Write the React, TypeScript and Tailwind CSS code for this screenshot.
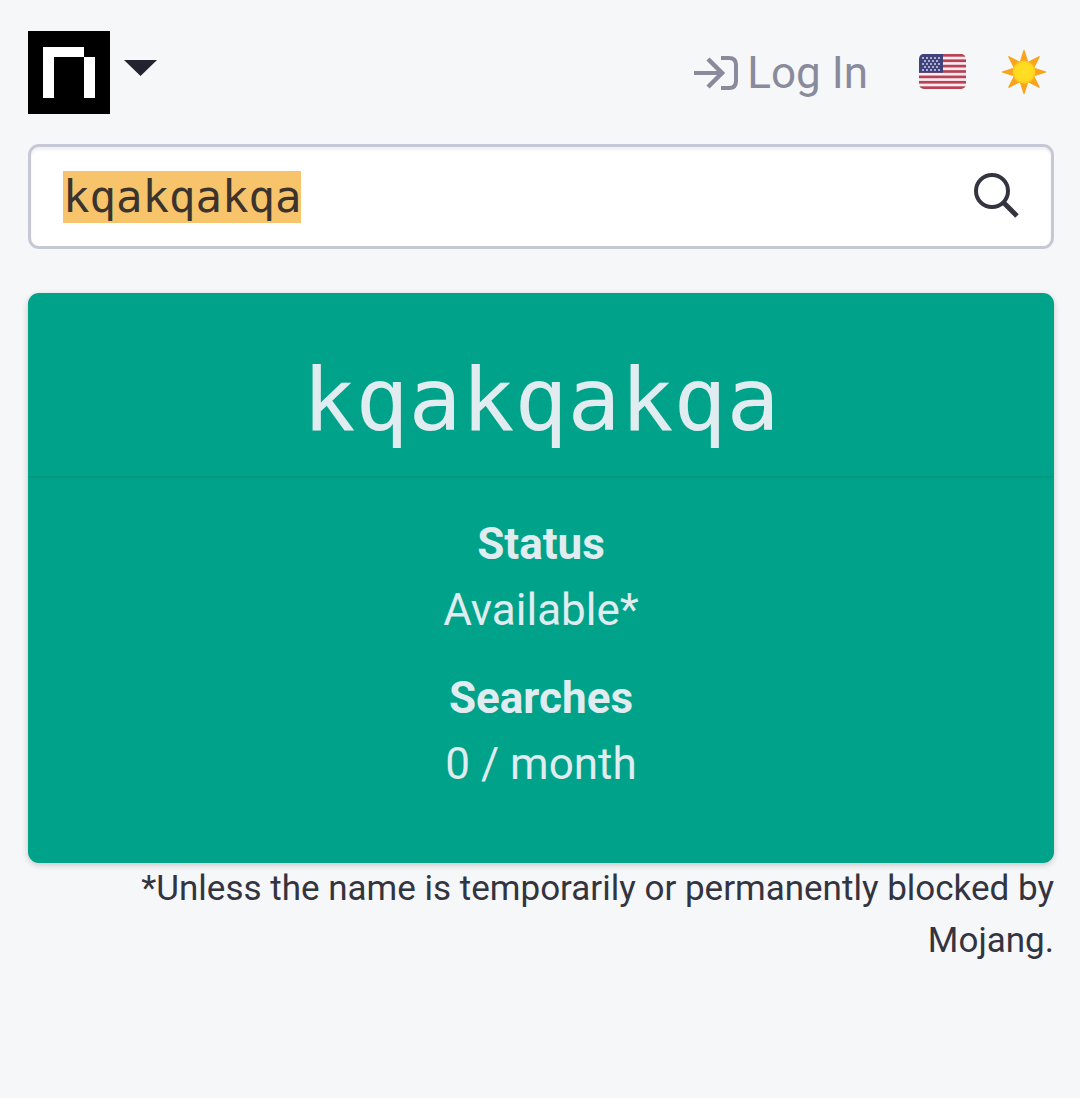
import { useEffect, useRef, useState } from "react";

const details = [
  { term: "Status", value: "Available*" },
  { term: "Searches", value: "0 / month" },
];

const stripes = [0, 2, 4, 6, 8, 10, 12];

const stars = [
  [4, 4], [8, 4], [12, 4], [16, 4], [20, 4],
  [6, 7], [10, 7], [14, 7], [18, 7],
  [4, 10], [8, 10], [12, 10], [16, 10], [20, 10],
  [6, 13], [10, 13], [14, 13], [18, 13],
  [4, 16], [8, 16], [12, 16], [16, 16], [20, 16],
];

const rays = [0, 45, 90, 135, 180, 225, 270, 315];

function Logo() {
  return (
    <svg className="h-[83px] w-[82px]" viewBox="0 0 82 83" shapeRendering="crispEdges" aria-hidden="true">
      <path d="M0 0h82v83H0z" fill="#000" />
      <path d="M15 16h41v10h11v41H56V26H26v41H15z" fill="#fff" />
    </svg>
  );
}

function LoginIcon() {
  return (
    <svg className="h-[34px] w-[45px]" viewBox="0 0 45 34" fill="none" stroke="currentColor" strokeWidth="4" aria-hidden="true">
      <path d="M0 17h27" />
      <path d="M14 3l14 14-14 14" strokeWidth="4.5" />
      <path d="M27 2h8q7 0 7 7v16q0 7-7 7h-8" />
    </svg>
  );
}

function FlagIcon() {
  return (
    <svg className="h-[35px] w-[47px]" viewBox="0 0 47 35" aria-hidden="true">
      <defs>
        <clipPath id="flag">
          <rect width="47" height="35" rx="5" />
        </clipPath>
      </defs>
      <g clipPath="url(#flag)">
        <path d="M0 0h47v35H0z" fill="#fbe9ee" />
        {stripes.map((row) => (
          <rect key={row} y={(row * 35) / 13} width="47" height={35 / 13} fill="#b34355" />
        ))}
        <path d="M0 0h24v18.8H0z" fill="#40427c" />
        {stars.map(([x, y]) => (
          <circle key={`${x}-${y}`} cx={x} cy={y} r="1.1" fill="#c9cbe6" />
        ))}
      </g>
    </svg>
  );
}

function SunIcon() {
  return (
    <svg className="size-11" viewBox="0 0 44 44" aria-hidden="true">
      <defs>
        <radialGradient id="sun">
          <stop offset="0" stopColor="#ffdf25" />
          <stop offset="0.8" stopColor="#ffd91f" />
          <stop offset="1" stopColor="#fcc21b" />
        </radialGradient>
      </defs>
      {rays.map((angle) => (
        <path key={angle} d="M21.5 0h1L27 14H17z" fill="#f8a51d" transform={`rotate(${angle} 22 22)`} />
      ))}
      <circle cx="22" cy="22" r="11.5" fill="url(#sun)" />
    </svg>
  );
}

export default function App() {
  const [name, setName] = useState("kqakqakqa");
  const searchRef = useRef<HTMLInputElement>(null);

  useEffect(() => {
    searchRef.current?.focus();
    searchRef.current?.select();
  }, []);

  return (
    <div className="min-h-screen bg-[#f6f7f9] pt-[31px] pr-[26px] pb-8 pl-7 font-['Roboto',sans-serif] text-[44px] leading-[66px] text-[#343440]">
      <header className="flex items-center justify-between">
        <button type="button" aria-label="Menu" className="flex items-center gap-[14px]">
          <Logo />
          <svg className="mb-2.5 h-4 w-[33px]" viewBox="0 0 33 16" aria-hidden="true">
            <path d="M0 0h33L16.5 16z" fill="#232330" />
          </svg>
        </button>

        <nav className="flex items-center pr-2">
          <a href="#login" className="mr-[51px] flex items-center gap-2 text-[#898b9c]">
            <LoginIcon />
            Log In
          </a>
          <button type="button" aria-label="Language" className="mr-9 mb-0.5">
            <FlagIcon />
          </button>
          <button type="button" aria-label="Theme" className="mb-0.5">
            <SunIcon />
          </button>
        </nav>
      </header>

      <form
        role="search"
        onSubmit={(event) => event.preventDefault()}
        className="mt-[30px] flex h-[105px] items-center rounded-[11px] border-3 border-[#c7c8d5] bg-white px-8 shadow-[inset_0_3px_3px_rgba(0,0,0,0.06)]"
      >
        <input
          ref={searchRef}
          type="text"
          aria-label="Search name"
          spellCheck={false}
          value={name}
          onChange={(event) => setName(event.target.value)}
          className="min-w-0 flex-1 bg-transparent font-['DejaVu_Sans_Mono',monospace] leading-[52px] outline-none selection:bg-[#f7c36b] selection:text-[#3b342e]"
        />
        <button type="submit" aria-label="Search" className="mb-1">
          <svg className="size-[46px]" viewBox="0 0 46 46" fill="none" stroke="#343440" strokeWidth="4" aria-hidden="true">
            <circle cx="19" cy="19" r="16" />
            <path d="M30 30l14 14" strokeWidth="5" />
          </svg>
        </button>
      </form>

      <main className="mt-11">
        <section className="rounded-[11px] bg-[#00a38a] text-center text-[#e1ecf0] shadow-[0_2px_6px_rgba(0,0,0,0.2)]">
          <h1 className="border-b-2 border-[#04997f] pt-[54px] pb-[23px] font-['DejaVu_Sans_Mono',monospace] text-[88px] leading-[106px]">
            kqakqakqa
          </h1>
          <dl className="pt-[33px] pb-11">
            {details.map((detail) => (
              <div key={detail.term} className="mb-[22px]">
                <dt className="font-bold">{detail.term}</dt>
                <dd>{detail.value}</dd>
              </div>
            ))}
          </dl>
        </section>
        <p className="text-right text-[35px] leading-[52px]">
          *Unless the name is temporarily or permanently blocked by Mojang.
        </p>
      </main>
    </div>
  );
}
